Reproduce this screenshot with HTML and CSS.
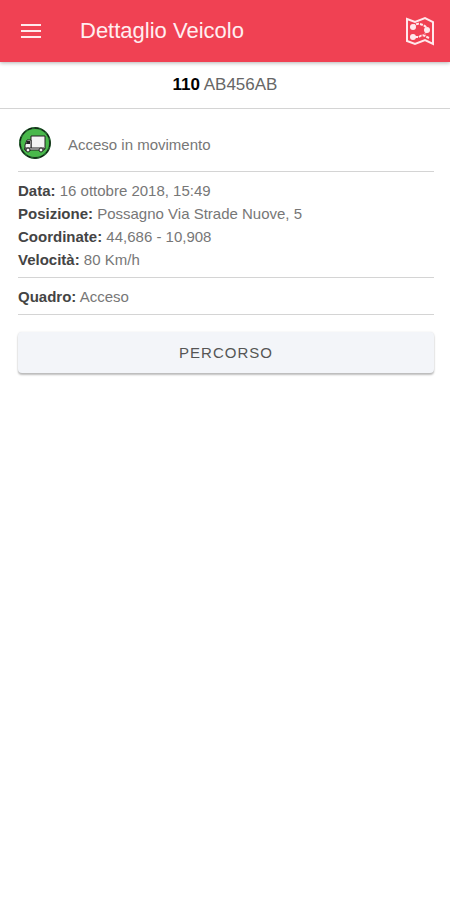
FILE: index.html
```html
<!DOCTYPE html>
<html lang="it">
<head>
    <meta charset="UTF-8">
    <meta name="viewport" content="width=device-width, initial-scale=1.0">
    <link rel="stylesheet" href="styles.css">
    <title>Dettaglio Veicolo</title>
</head>
<body>
    <header class="toolbar">
        <button class="icon-button" type="button" aria-label="Menu">
            <svg width="22" height="18" viewBox="0 0 22 18">
                <path d="M1 3h20M1 9h20M1 15h20" stroke="#ffe9ec" stroke-width="2"/>
            </svg>
        </button>
        <h1>Dettaglio Veicolo</h1>
        <button class="icon-button" type="button" aria-label="Mappa">
            <svg width="30" height="30" viewBox="0 0 30 30" fill="none" stroke="#ffe9ec">
                <path d="M2 3l8 3 10-4 8 4v22l-8-4-10 4-8-3z" stroke-width="2"/>
                <path d="M8 11q3-4 7-3t7 4M22 14l-2 4M10 21h4q3-3 6-1l4 2" stroke-width="2" stroke-dasharray="3 1"/>
                <g fill="#ffe9ec" stroke="none">
                    <circle cx="8" cy="11" r="3"/>
                    <circle cx="22" cy="14" r="3"/>
                    <circle cx="8" cy="21" r="3"/>
                </g>
            </svg>
        </button>
    </header>

    <div class="vehicle"><strong>110</strong> AB456AB</div>

    <main class="content">
        <div class="status">
            <svg width="34" height="34" viewBox="0 0 34 34">
                <circle cx="17" cy="18" r="15" fill="#49b94b" stroke="#205c2b" stroke-width="2"/>
                <circle cx="17" cy="18" r="15" fill="none" stroke="#111" stroke-width="1" stroke-dasharray="4 3"/>
                <g fill="#f4f4f4" stroke="#222" stroke-width="1">
                    <path d="M13 11h14v13H13z"/>
                    <path d="M13 15H9l-2 5v5h6z"/>
                    <path d="M7 23h19v2H7z"/>
                    <circle cx="10" cy="25" r="2"/>
                    <circle cx="23" cy="25" r="2"/>
                </g>
                <path d="M9 16h3v3H8z" fill="#222"/>
            </svg>
            <span>Acceso in movimento</span>
        </div>

        <div class="details">
            <p><strong>Data:</strong> 16 ottobre 2018, 15:49</p>
            <p><strong>Posizione:</strong> Possagno Via Strade Nuove, 5</p>
            <p><strong>Coordinate:</strong> 44,686 - 10,908</p>
            <p><strong>Velocità:</strong> 80 Km/h</p>
        </div>

        <div class="details">
            <p><strong>Quadro:</strong> Acceso</p>
        </div>

        <button class="route-button" type="button">PERCORSO</button>
    </main>
</body>
</html>
```
FILE: styles.css
```css
* {
    box-sizing: border-box;
}

body {
    margin: 0;
    background: #fff;
    color: #777;
    font-family: "Liberation Sans", Arial, sans-serif;
    font-size: 15px;
}

.toolbar {
    display: flex;
    align-items: center;
    height: 62px;
    padding: 0 15px 0 20px;
    background: #f04153;
    box-shadow: 0 1px 4px rgba(0, 0, 0, 0.3);
}

.toolbar h1 {
    flex: 1;
    margin: 0 0 0 38px;
    color: #ffeef0;
    font-size: 22px;
    font-weight: normal;
}

.icon-button {
    display: flex;
    padding: 0;
    border: none;
    background: none;
    cursor: pointer;
}

.vehicle {
    padding: 12px 0;
    border-bottom: 1px solid #d4d4d4;
    color: #666;
    font-size: 17px;
    line-height: 22px;
    text-align: center;
}

.vehicle strong {
    color: #000;
}

.content {
    padding: 16px 16px 16px 18px;
}

.status {
    display: flex;
    align-items: center;
    gap: 16px;
    padding-bottom: 12px;
    border-bottom: 1px solid #d4d4d4;
}

.status span {
    padding-top: 5px;
}

.details {
    padding: 7px 0 6px;
    border-bottom: 1px solid #d4d4d4;
}

.details p {
    margin: 0;
    line-height: 23px;
}

.details strong {
    color: #444;
}

.route-button {
    display: block;
    width: 100%;
    height: 41px;
    margin-top: 17px;
    border: none;
    border-radius: 4px;
    background: #f3f5f9;
    box-shadow: 0 2px 2px rgba(0, 0, 0, 0.25), 0 0 2px rgba(0, 0, 0, 0.1);
    color: #555;
    font-family: inherit;
    font-size: 15px;
    letter-spacing: 1px;
    cursor: pointer;
}
```
